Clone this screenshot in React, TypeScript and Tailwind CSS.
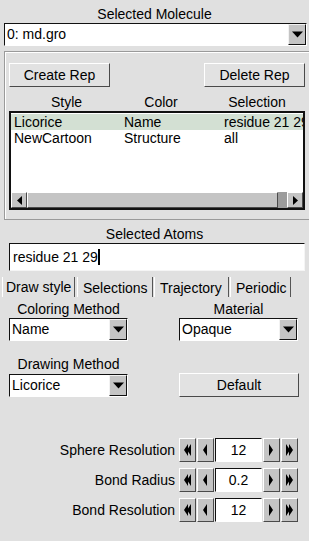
import React from "react";

const up = "border border-t-white border-l-white border-b-[#4a4a4a] border-r-[#4a4a4a]";
const down = "border border-t-[#4a4a4a] border-l-[#4a4a4a] border-b-white border-r-white";

function DownTri() {
  return (
    <svg width="11" height="7" viewBox="0 0 11 7">
      <path d="M0 0.5H11L5.5 6.5Z" fill="#000" />
    </svg>
  );
}

function Choice({ value, w }: { value: string; w: string }) {
  return (
    <div className={`${w} h-[23px] flex bg-white border border-t-[#111] border-l-[#111] border-b-white border-r-white`}>
      <div className="flex-1 pl-[2px] leading-[21px] whitespace-nowrap overflow-hidden">{value}</div>
      <div className={`w-[18px] bg-[#c4c4c4] flex items-center justify-center border border-t-[#f2f2f2] border-l-[#f2f2f2] border-b-[#111] border-r-[#111]`}>
        <DownTri />
      </div>
    </div>
  );
}

function Arrow({ dir, double }: { dir: "l" | "r"; double?: boolean }) {
  const single = dir === "l" ? "M4 0V12L0 6Z" : "M0 0V12L4 6Z";
  return (
    <svg width={double ? 8 : 5} height="12" viewBox={`0 0 ${double ? 8 : 5} 12`}>
      <path d={single} fill="#000" />
      {double && <path d={single} transform="translate(3 0)" fill="#000" />}
    </svg>
  );
}

function Spinner({ label, value }: { label: string; value: string }) {
  const btn = `w-[17px] h-[24px] bg-[#c4c4c4] flex items-center justify-center ${up}`;
  return (
    <div className="flex items-center h-[24px]">
      <div className="w-[175px] text-right">{label}</div>
      <div className="ml-[4px] flex gap-[1px]">
        <div className={btn}><Arrow dir="l" double /></div>
        <div className={btn}><Arrow dir="l" /></div>
        <div className={`w-[47px] h-[24px] bg-white text-center leading-[22px] ${down} border-t-[#111] border-l-[#111]`}>{value}</div>
        <div className={btn}><Arrow dir="r" /></div>
        <div className={btn}><Arrow dir="r" double /></div>
      </div>
    </div>
  );
}

export default function App() {
  return (
    <div className="w-[309px] h-[541px] overflow-hidden bg-[#e0e0e0] text-[14px] text-black font-['Liberation_Sans',Arial,sans-serif]">
      <div className="pt-[5px] leading-[18px] text-center">Selected Molecule</div>
      <div className="ml-[4px]">
        <Choice value="0: md.gro" w="w-[303px]" />
      </div>

      <div className="mt-[5px] ml-[4px] h-[169px] border-t border-l border-b border-[#9a9a9a] shadow-[inset_1px_1px_0_#fff]">
        <div className="mt-[11px] pl-[4px] pr-[4px] flex justify-between">
          <button className={`w-[101px] h-[24px] bg-[#e2e2e2] ${up}`}>Create Rep</button>
          <button className={`w-[101px] h-[24px] bg-[#e2e2e2] ${up}`}>Delete Rep</button>
        </div>
        <div className="mt-[6px] h-[18px] leading-[18px] flex pl-[4px]">
          <span className="w-[115px] text-center">Style</span>
          <span className="w-[74px] text-center">Color</span>
          <span className="ml-[26px] w-[66px] text-center">Selection</span>
        </div>
        <div className="ml-[4px] w-[296px] h-[99px] flex flex-col bg-white border-2 border-t-[#111] border-l-[#111] border-b-[#111] border-r-[#111]">
          <div className="pt-[1px]">
            <div className="h-[16px] leading-[16px] flex pl-[3px] bg-[#d3e0d3] whitespace-nowrap overflow-hidden">
              <span className="w-[110px] shrink-0">Licorice</span>
              <span className="w-[100px] shrink-0">Name</span>
              <span className="shrink-0">residue 21 29</span>
            </div>
            <div className="h-[16px] leading-[16px] flex pl-[3px] whitespace-nowrap">
              <span className="w-[110px] shrink-0">NewCartoon</span>
              <span className="w-[100px] shrink-0">Structure</span>
              <span>all</span>
            </div>
          </div>
          <div className="mt-auto h-[16px] flex bg-[#9c9c9c]">
            <div className={`w-[16px] bg-[#c4c4c4] flex items-center justify-center ${up}`}>
              <svg width="5" height="9" viewBox="0 0 5 9"><path d="M5 0V9L0 4.5Z" fill="#000" /></svg>
            </div>
            <div className={`w-[251px] bg-[#c4c4c4] ${up}`} />
            <div className="flex-1" />
            <div className={`w-[16px] bg-[#c4c4c4] flex items-center justify-center ${up}`}>
              <svg width="5" height="9" viewBox="0 0 5 9"><path d="M0 0V9L5 4.5Z" fill="#000" /></svg>
            </div>
          </div>
        </div>
      </div>

      <div className="mt-[5px] leading-[18px] text-center">Selected Atoms</div>
      <div className="ml-[9px] w-[296px] h-[28px] bg-white flex items-center pl-[3px] border border-t-[#111] border-l-[#111] border-b-[#f5f5f5] border-r-[#f5f5f5]">
        <span>residue 21 29</span>
        <span className="w-[2px] h-[16px] bg-black" />
      </div>

      <div className="mt-[6px] h-[20px] flex ml-[2px] leading-[20px]">
        <div className="w-[73px] pl-[3px] border-l border-l-white border-r border-r-[#555] bg-[#e0e0e0]">Draw style</div>
        <div className="ml-[2px] w-[76px] pl-[5px] pt-[1px] border-l border-l-white border-r border-r-[#555]">Selections</div>
        <div className="ml-[1px] w-[75px] pl-[5px] pt-[1px] border-l border-l-white border-r border-r-[#555]">Trajectory</div>
        <div className="ml-[1px] w-[61px] pl-[5px] pt-[1px] border-l border-l-white border-r border-r-[#555]">Periodic</div>
      </div>

      <div className="mt-[3px] flex pl-[9px] leading-[18px]">
        <div className="w-[119px] text-center">Coloring Method</div>
        <div className="ml-[51px] w-[119px] text-center">Material</div>
      </div>
      <div className="flex pl-[9px]">
        <Choice value="Name" w="w-[119px]" />
        <div className="ml-[51px]"><Choice value="Opaque" w="w-[119px]" /></div>
      </div>

      <div className="mt-[14px] flex pl-[9px] leading-[18px]">
        <div className="w-[119px] text-center">Drawing Method</div>
      </div>
      <div className="flex pl-[9px] items-end">
        <Choice value="Licorice" w="w-[119px]" />
        <button className={`ml-[51px] w-[120px] h-[24px] bg-[#e2e2e2] ${up}`}>Default</button>
      </div>

      <div className="mt-[41px] flex flex-col gap-[6px]">
        <Spinner label="Sphere Resolution" value="12" />
        <Spinner label="Bond Radius" value="0.2" />
        <Spinner label="Bond Resolution" value="12" />
      </div>
    </div>
  );
}
